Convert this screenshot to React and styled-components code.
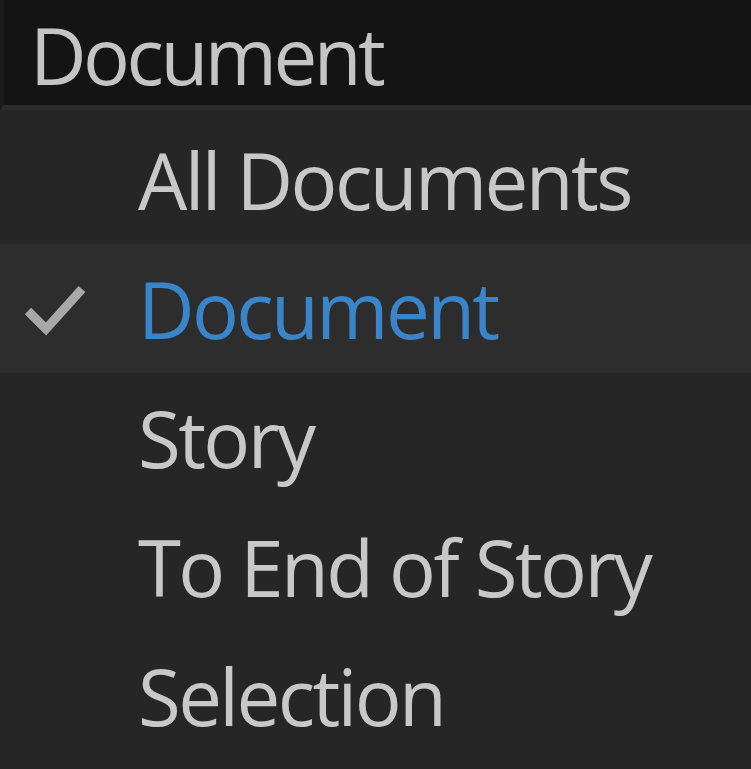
import React from "react";
import styled, { createGlobalStyle } from "styled-components";

const Global = createGlobalStyle`
  html, body {
    margin: 0;
    padding: 0;
    background: #262626;
  }
  body {
    font-family: "Open Sans", "Noto Sans", sans-serif;
  }
`;

const Wrap = styled.div`
  width: 751px;
  height: 769px;
  overflow: hidden;
  background: #262626;
  display: flex;
  flex-direction: column;
`;

const Field = styled.div`
  height: 110px;
  background: #141414;
  border-left: 4px solid #1c1c1c;
  border-bottom: 5px solid #2c2c2c;
  display: flex;
  align-items: center;
  padding-left: 26px;
  padding-top: 4px;
  font-size: 78px;
  font-weight: 500;
  color: #c4c4c4;
  letter-spacing: -3.5px;
  box-sizing: border-box;
`;

const Menu = styled.div`
  display: flex;
  flex-direction: column;
  padding-top: 5px;
`;

const Item = styled.div`
  height: 129px;
  display: flex;
  align-items: center;
  background: ${(p) => (p.$active ? "#2d2d2d" : "transparent")};
  color: ${(p) => (p.$active ? "#3a84c9" : "#c8c8c8")};
  font-size: 78px;
  font-weight: 500;
  letter-spacing: -2.6px;
`;

const Check = styled.span`
  width: 138px;
  display: flex;
  align-items: center;
  padding-left: 22px;
  box-sizing: border-box;
`;

const items = ["All Documents", "Document", "Story", "To End of Story", "Selection"];

export default function App() {
  return (
    <Wrap>
      <Global />
      <Field>Document</Field>
      <Menu>
        {items.map((t) => (
          <Item key={t} $active={t === "Document"}>
            <Check>
              {t === "Document" && (
                <svg width="66" height="56" viewBox="0 0 66 56">
                  <path d="M6 30 L24 48 L60 8" fill="none" stroke="#a8a8a8" strokeWidth="9" />
                </svg>
              )}
            </Check>
            {t}
          </Item>
        ))}
      </Menu>
    </Wrap>
  );
}
